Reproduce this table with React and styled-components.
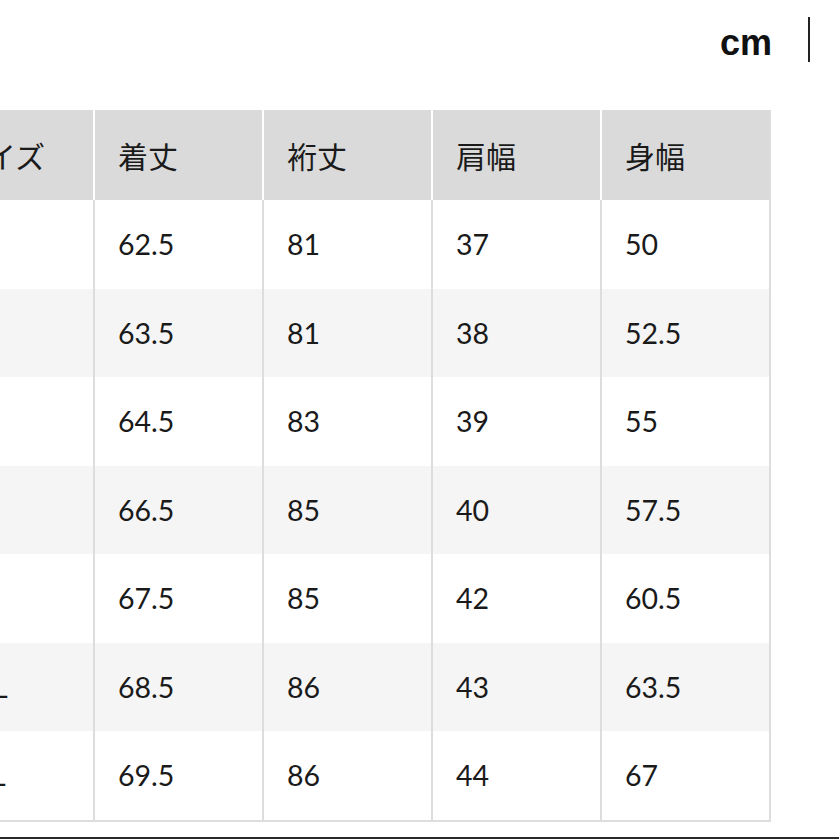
import React from "react";
import styled, { createGlobalStyle } from "styled-components";

const GlobalStyle = createGlobalStyle`
  html, body {
    margin: 0;
    padding: 0;
    background: #ffffff;
  }
  body {
    font-family: Lato, "Noto Sans CJK JP", sans-serif;
    color: #1c1c1c;
  }
`;

const Pagina = styled.div`
  width: 839px;
  height: 839px;
  overflow: hidden;
  display: flex;
  flex-direction: column;
  background: #ffffff;
`;

const BarraTopo = styled.div`
  height: 110px;
  flex-shrink: 0;
  display: flex;
  justify-content: flex-end;
  align-items: flex-start;
  padding-right: 29px;
  box-sizing: border-box;
`;

const Unidade = styled.div`
  display: flex;
  align-items: center;
  gap: 36px;
  height: 45px;
  margin-top: 17px;
`;

const TextoCm = styled.span`
  font-family: "Liberation Sans", Arial, sans-serif;
  font-weight: 700;
  font-size: 36px;
  line-height: 36px;
  margin-top: 6px;
  color: #111;
`;

const Separador = styled.span`
  width: 2px;
  height: 45px;
  background: #222;
`;

const Tabela = styled.div`
  display: grid;
  grid-template-columns: 162px repeat(4, 169px);
  grid-template-rows: 90px repeat(7, 88.5px);
  margin-left: -67px;
  width: fit-content;
  border-bottom: 2px solid #dddddd;
  flex-shrink: 0;
`;

const Celula = styled.div`
  display: flex;
  align-items: center;
  padding-left: 23px;
  box-sizing: border-box;
  background: ${(p) => (p.cabecalho ? "#dadada" : p.par ? "#f5f5f5" : "#ffffff")};
  border-right: 2px solid ${(p) => (p.cabecalho && !p.ultima ? "#ffffff" : "#dddddd")};
  font-size: ${(p) => (p.cabecalho ? "30px" : "28.5px")};
  font-weight: 400;
  color: #1a1a1a;
  white-space: nowrap;
  overflow: hidden;
`;

const Espaco = styled.div`
  flex: 1;
`;

const LinhaFinal = styled.div`
  height: 2px;
  background: #2a2a2a;
  flex-shrink: 0;
`;

const cabecalhos = ["サイズ", "着丈", "裄丈", "肩幅", "身幅"];

const linhas = [
  ["XS", "62.5", "81", "37", "50"],
  ["S", "63.5", "81", "38", "52.5"],
  ["M", "64.5", "83", "39", "55"],
  ["L", "66.5", "85", "40", "57.5"],
  ["XL", "67.5", "85", "42", "60.5"],
  ["XXL", "68.5", "86", "43", "63.5"],
  ["3XL", "69.5", "86", "44", "67"],
];

export default function App() {
  return (
    <Pagina>
      <GlobalStyle />
      <BarraTopo>
        <Unidade>
          <TextoCm>cm</TextoCm>
          <Separador />
        </Unidade>
      </BarraTopo>
      <Tabela>
        {cabecalhos.map((titulo, i) => (
          <Celula key={titulo} cabecalho ultima={i === cabecalhos.length - 1}>
            {titulo}
          </Celula>
        ))}
        {linhas.map((linha, r) =>
          linha.map((valor, c) => (
            <Celula key={r + "-" + c} par={r % 2 === 1} ultima={c === linha.length - 1}>
              {valor}
            </Celula>
          ))
        )}
      </Tabela>
      <Espaco />
      <LinhaFinal />
    </Pagina>
  );
}
